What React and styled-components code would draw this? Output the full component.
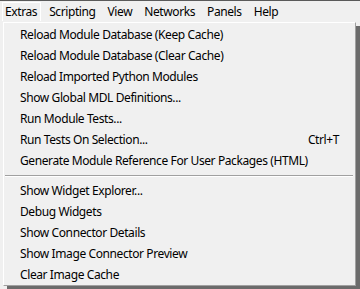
import styled, { createGlobalStyle } from "styled-components"

const GlobalStyle = createGlobalStyle`
    html, body{
        margin: 0;
        padding: 0;
        background: #f0f0f0;
        overflow: hidden;
    }
    body{
        font-family: "Noto Sans", "Open Sans", sans-serif;
        font-size: 12px;
        letter-spacing: -0.4px;
        color: #000;
    }
`

const menus = ["Extras", "Scripting", "View", "Networks", "Panels", "Help"]

const items = [
    {label: "Reload Module Database (Keep Cache)"},
    {label: "Reload Module Database (Clear Cache)"},
    {label: "Reload Imported Python Modules"},
    {label: "Show Global MDL Definitions..."},
    {label: "Run Module Tests..."},
    {label: "Run Tests On Selection...", shortcut: "Ctrl+T"},
    {label: "Generate Module Reference For User Packages (HTML)"},
    {separator: true},
    {label: "Show Widget Explorer..."},
    {label: "Debug Widgets"},
    {label: "Show Connector Details"},
    {label: "Show Image Connector Preview"},
    {label: "Clear Image Cache"},
]

export default function App(){
    return (
        <Page>
            <GlobalStyle />
            <MenuBar>
                {menus.map((m, i) => (
                    <MenuTitle key={m} open={i === 0}>{m}</MenuTitle>
                ))}
            </MenuBar>
            <Dropdown>
                {items.map((item, id) => {
                    if(item.separator){
                        return <Separator key={id} />
                    }
                    return (
                        <Item key={id}>
                            <span>{item.label}</span>
                            {item.shortcut && <Shortcut>{item.shortcut}</Shortcut>}
                        </Item>
                    )
                })}
            </Dropdown>
        </Page>
    )
}

const Page = styled.div`
    width: 360px;
    height: 289px;
    box-sizing: border-box;
    border-top: 1px solid #5a5a5a;
    background: #f0f0f0;
`
const MenuBar = styled.div`
    display: flex;
    align-items: stretch;
    height: 20px;
    padding: 1px 0 0 2px;
    gap: 5px;
`
const MenuTitle = styled.div`
    display: flex;
    align-items: center;
    box-sizing: border-box;
    padding: 0 3px 1px 2px;
    height: 19px;
    border: 1px solid ${p => p.open ? "#ffffff" : "transparent"};
    border-bottom: none;
    line-height: 1;
`
const Dropdown = styled.div`
    margin-left: 3px;
    width: 353px;
    height: 264px;
    box-sizing: border-box;
    border-top: 1px solid #ffffff;
    border-left: 1px solid #ffffff;
    border-right: 1px solid #a0a0a0;
    border-bottom: 1px solid #a0a0a0;
    background: #f0f0f0;
    padding-top: 1px;
    box-shadow: 4px 4px 0 #6b6b6b;
`
const Item = styled.div`
    display: flex;
    align-items: center;
    justify-content: space-between;
    height: 21px;
    padding: 0 16px 0 16px;
    white-space: nowrap;
`
const Shortcut = styled.span`
    margin-left: 20px;
`
const Separator = styled.div`
    height: 9px;
    display: flex;
    align-items: center;
    padding: 0 2px 0 1px;
    &::after{
        content: "";
        flex: 1;
        height: 1px;
        background: #a0a0a0;
        border-bottom: 1px solid #ffffff;
    }
`
